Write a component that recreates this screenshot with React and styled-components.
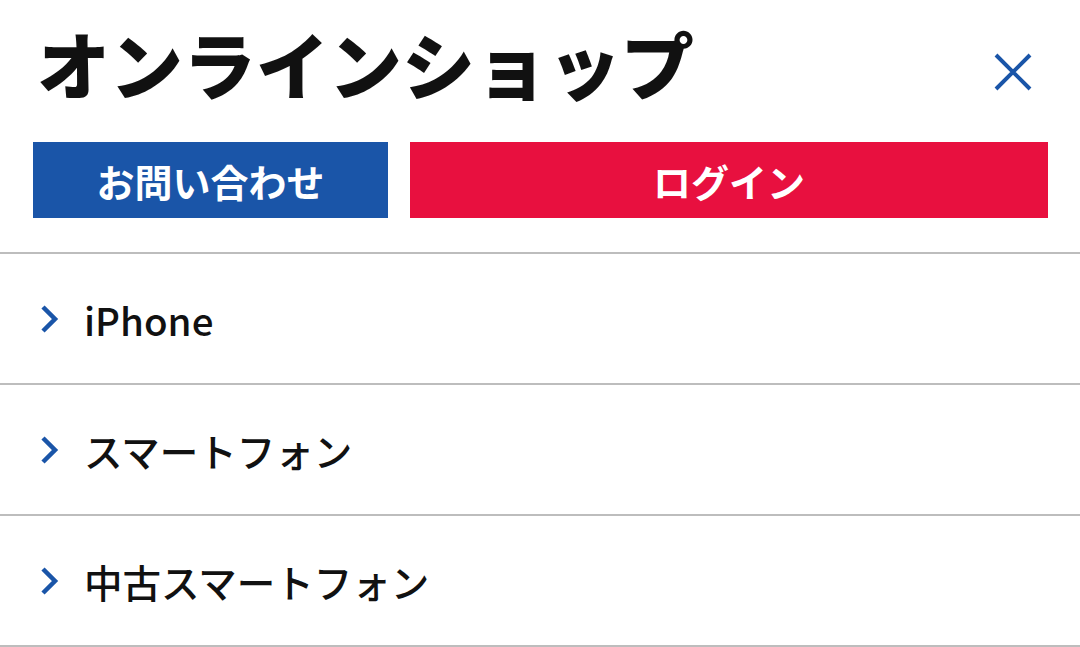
import React from 'react'
import styled, { createGlobalStyle } from 'styled-components'

const GlobalStyle = createGlobalStyle`
  html, body {
    margin: 0;
    padding: 0;
    background: #ffffff;
  }
  body {
    font-family: "Noto Sans CJK JP", "Noto Sans", sans-serif;
  }
`

const Page = styled.div`
  width: 1080px;
  height: 647px;
  overflow: hidden;
  background: #fff;
`

const Header = styled.header`
  display: flex;
  justify-content: space-between;
  align-items: center;
  padding: 25px 48px 0 37px;
  height: 100px;
  box-sizing: border-box;
`

const Title = styled.h1`
  margin: 0;
  font-size: 73px;
  line-height: 1;
  font-weight: 900;
  color: #111;
  letter-spacing: 0;
`

const CloseButton = styled.button`
  border: 0;
  background: none;
  padding: 0;
  margin-top: 18px;
  width: 38px;
  height: 38px;
  display: flex;
  align-items: center;
  justify-content: center;
  cursor: pointer;
`

const Actions = styled.div`
  display: grid;
  grid-template-columns: 355px 1fr;
  gap: 22px;
  padding: 42px 32px 0 33px;
`

const ActionButton = styled.a`
  height: 76px;
  display: flex;
  align-items: center;
  justify-content: center;
  background: ${p => (p.$tone === 'red' ? '#e8103f' : '#1a55a8')};
  color: #fff;
  font-size: 38px;
  font-weight: 700;
  text-decoration: none;
  letter-spacing: 0;
`

const Menu = styled.ul`
  list-style: none;
  margin: 34px 0 0;
  padding: 0;
  border-top: 2px solid #bdbdbd;
`

const MenuItem = styled.li`
  height: 131px;
  border-bottom: 2px solid #bdbdbd;
  display: flex;
  align-items: center;
  gap: 24px;
  padding-left: 39px;
  box-sizing: border-box;
  font-size: 38.5px;
  font-weight: 500;
  color: #111;
`

const Chevron = () => (
  <svg width="21" height="30" viewBox="0 0 21 30">
    <path d="M4 3 L16 15 L4 27" fill="none" stroke="#1a55a8" strokeWidth="4.5" />
  </svg>
)

const items = ['iPhone', 'スマートフォン', '中古スマートフォン']

export default function App() {
  return (
    <Page>
      <GlobalStyle />
      <Header>
        <Title>オンラインショップ</Title>
        <CloseButton aria-label="閉じる">
          <svg width="38" height="38" viewBox="0 0 38 38">
            <path d="M2 2 L36 36 M36 2 L2 36" stroke="#1a55a8" strokeWidth="4" />
          </svg>
        </CloseButton>
      </Header>
      <Actions>
        <ActionButton>お問い合わせ</ActionButton>
        <ActionButton $tone="red">ログイン</ActionButton>
      </Actions>
      <Menu>
        {items.map(item => (
          <MenuItem key={item}>
            <Chevron />
            {item}
          </MenuItem>
        ))}
      </Menu>
    </Page>
  )
}
